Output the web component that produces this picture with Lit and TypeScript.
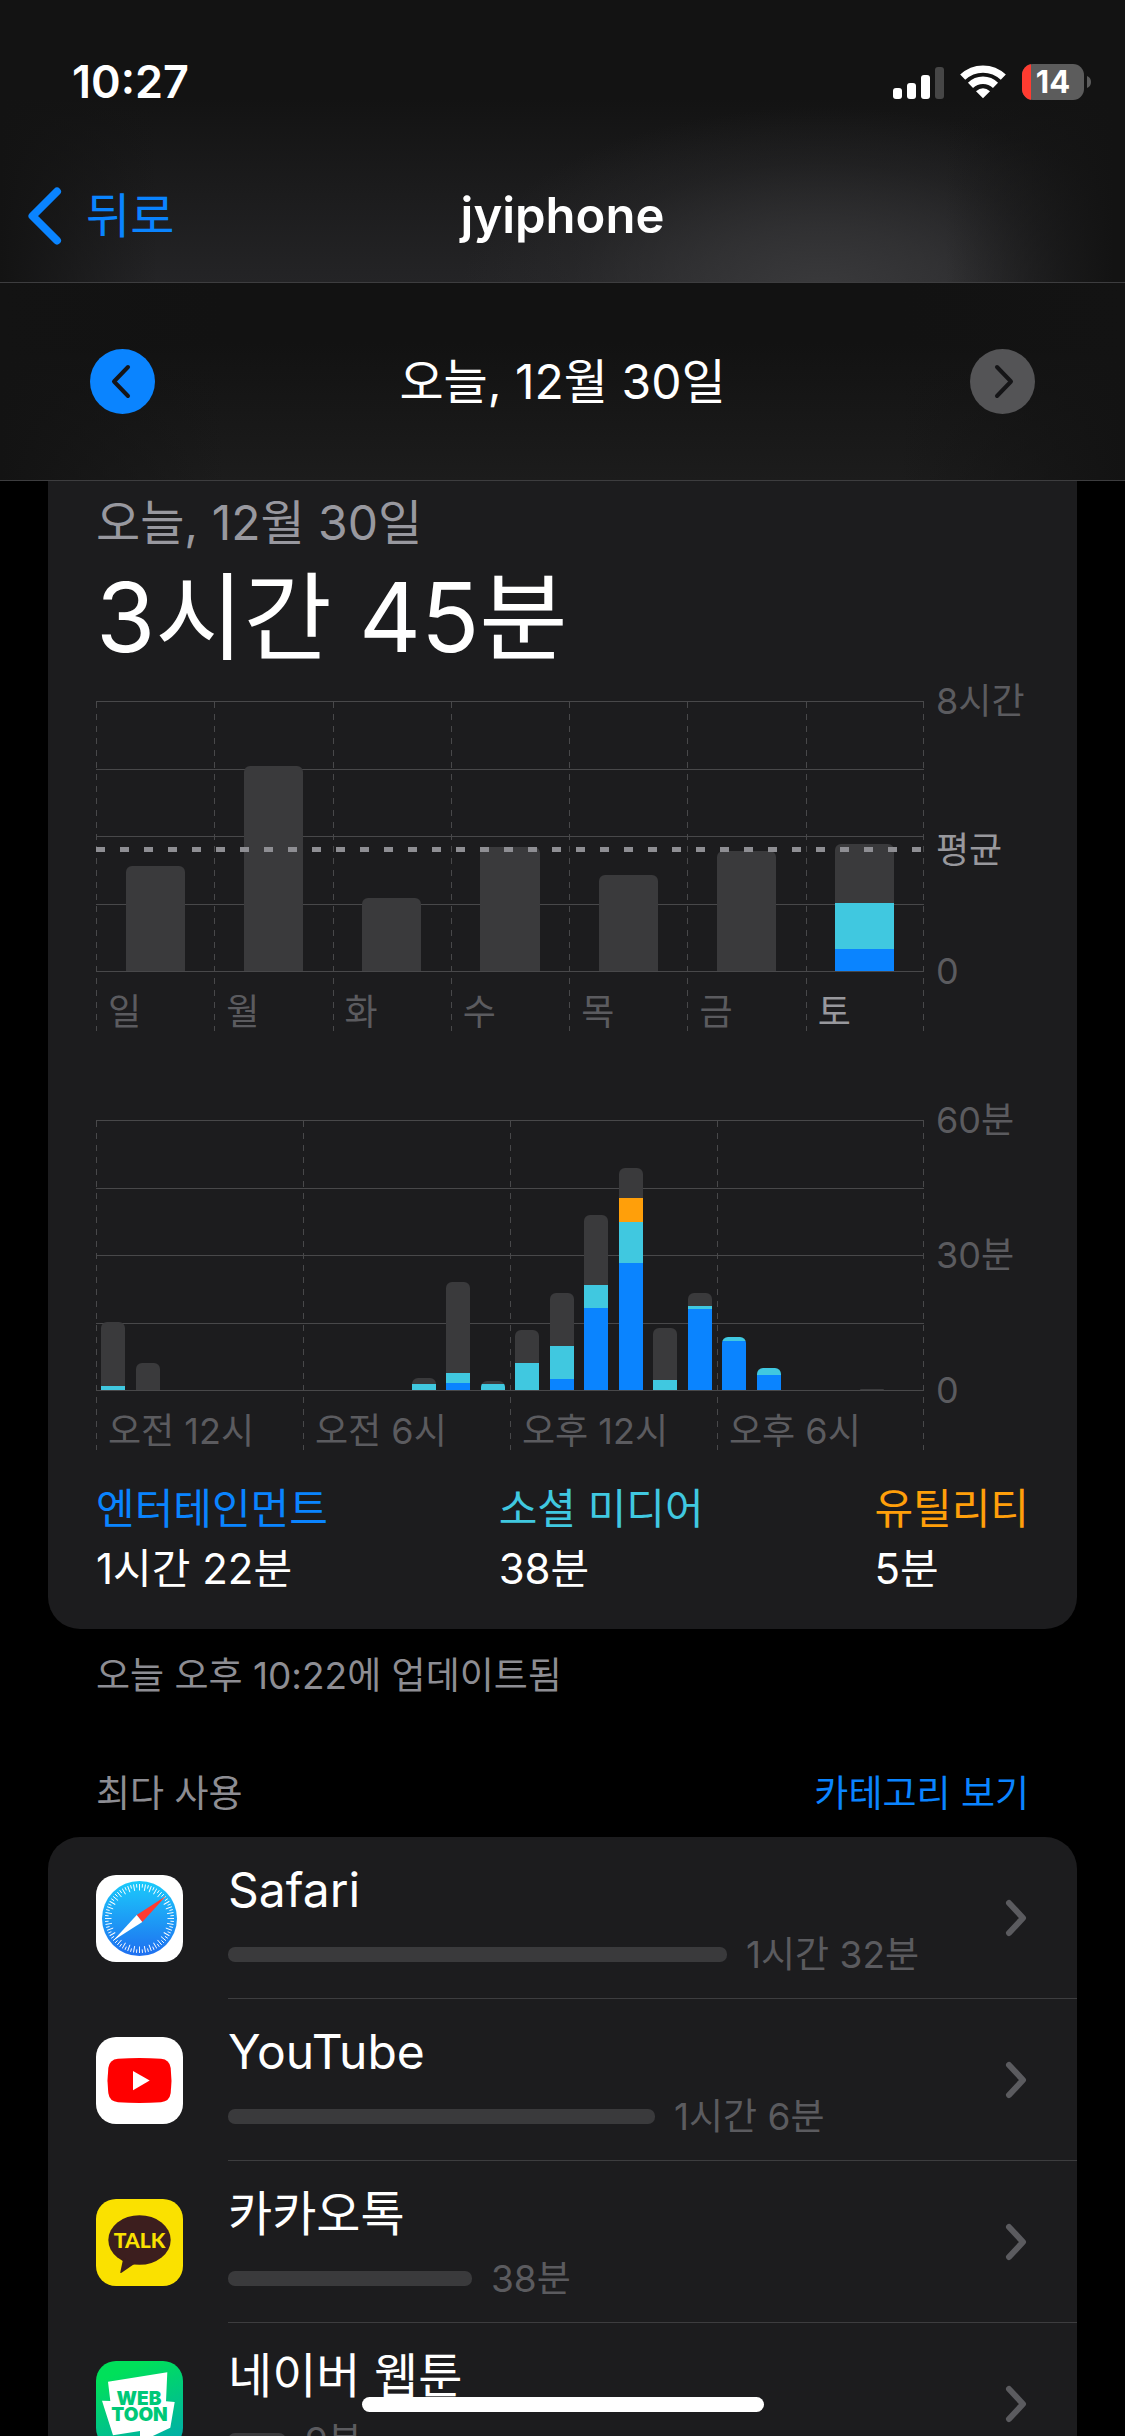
import { LitElement, html, svg, css, nothing } from "lit";
import { customElement, property } from "lit/decorators.js";
import { classMap } from "lit/directives/class-map.js";
import { styleMap } from "lit/directives/style-map.js";

type Tone = "rest" | "blue" | "cyan" | "orange";
interface Segment { tone: Tone; size: number; }
interface Tick { text: string; at: number; strong?: boolean; }
interface Section { text: string; strong?: boolean; }

const DAY_MAX = 270;

const weekBars: Segment[][] = [
  [{ tone: "rest", size: 105 }],
  [{ tone: "rest", size: 205 }],
  [{ tone: "rest", size: 73 }],
  [{ tone: "rest", size: 124 }],
  [{ tone: "rest", size: 96 }],
  [{ tone: "rest", size: 120 }],
  [{ tone: "rest", size: 59 }, { tone: "cyan", size: 46 }, { tone: "blue", size: 22 }],
];

const hourBars: Segment[][] = Array.from({ length: 24 }, () => []);
hourBars[0] = [{ tone: "rest", size: 64 }, { tone: "cyan", size: 4 }];
hourBars[1] = [{ tone: "rest", size: 27 }];
hourBars[9] = [{ tone: "rest", size: 6 }, { tone: "cyan", size: 6 }];
hourBars[10] = [{ tone: "rest", size: 91 }, { tone: "cyan", size: 10 }, { tone: "blue", size: 7 }];
hourBars[11] = [{ tone: "rest", size: 3 }, { tone: "cyan", size: 6 }];
hourBars[12] = [{ tone: "rest", size: 33 }, { tone: "cyan", size: 27 }];
hourBars[13] = [{ tone: "rest", size: 53 }, { tone: "cyan", size: 33 }, { tone: "blue", size: 11 }];
hourBars[14] = [{ tone: "rest", size: 70 }, { tone: "cyan", size: 23 }, { tone: "blue", size: 82 }];
hourBars[15] = [
  { tone: "rest", size: 30 },
  { tone: "orange", size: 24 },
  { tone: "cyan", size: 41 },
  { tone: "blue", size: 127 },
];
hourBars[16] = [{ tone: "rest", size: 52 }, { tone: "cyan", size: 10 }];
hourBars[17] = [{ tone: "rest", size: 13 }, { tone: "cyan", size: 3 }, { tone: "blue", size: 81 }];
hourBars[18] = [{ tone: "cyan", size: 4 }, { tone: "blue", size: 49 }];
hourBars[19] = [{ tone: "cyan", size: 7 }, { tone: "blue", size: 15 }];
hourBars[22] = [{ tone: "rest", size: 1 }];

@customElement("usage-chart")
export class UsageChart extends LitElement {
  @property({ attribute: false }) bars: Segment[][] = [];
  @property({ attribute: false }) sections: Section[] = [];
  @property({ attribute: false }) ticks: Tick[] = [];
  @property({ type: Number }) average = 0;
  @property({ type: Boolean }) narrow = false;

  static styles = css`
    :host { display: block; }
    .chart { display: grid; grid-template-columns: 1fr 105px; }
    .plot { position: relative; }
    .sections { display: grid; grid-auto-flow: column; grid-auto-columns: 1fr; }
    .section, .edge {
      background: repeating-linear-gradient(to bottom, transparent 0 1px, #48484a 1px 7px, transparent 7px 12px)
        left top / 1px 100% no-repeat;
    }
    .section { box-sizing: border-box; height: 330px; padding: 287px 0 0 12px; }
    .label { font-size: 36px; line-height: 48px; color: #5b5b5f; white-space: nowrap; }
    .strong { color: #98989d; }
    .edge { position: absolute; inset: 0 0 0 auto; width: 1px; }
    .layer { position: absolute; inset: 0 0 auto 0; }
    .rules { height: 271px; display: flex; flex-direction: column; justify-content: space-between; }
    .rule { height: 1px; background: #48484a; }
    .bars {
      height: 270px; display: grid; grid-auto-flow: column; grid-auto-columns: 1fr;
      align-items: end; justify-items: center;
    }
    .bar { width: 50%; border-radius: 6px 6px 0 0; overflow: hidden; }
    .slim .bar { width: 70%; }
    .rest { background: #3a3a3c; }
    .blue { background: #0a84ff; }
    .cyan { background: #40c8e0; }
    .orange { background: #ff9f0a; }
    .average {
      height: 5px;
      background: repeating-linear-gradient(to right, #8e8e93 0 9px, transparent 9px 24px);
    }
    .axis { position: relative; height: 270px; }
    .tick { position: absolute; left: 12px; transform: translateY(-50%); }
  `;

  render() {
    return html`
      <div class="chart">
        <div class="plot">
          <div class="sections">
            ${this.sections.map((s) => html`<div class="section">
              <div class=${classMap({ label: true, strong: !!s.strong })}>${s.text}</div>
            </div>`)}
          </div>
          <div class="edge"></div>
          <div class="layer rules">${[0, 1, 2, 3, 4].map(() => html`<div class="rule"></div>`)}</div>
          <div class=${classMap({ layer: true, bars: true, slim: this.narrow })}>
            ${this.bars.map((bar) => html`<div class="bar">
              ${bar.map((s) => html`<div class=${s.tone} style=${styleMap({ height: `${s.size}px` })}></div>`)}
            </div>`)}
          </div>
          ${this.average
            ? html`<div class="layer average" style=${styleMap({ top: `${DAY_MAX - this.average}px` })}></div>`
            : nothing}
        </div>
        <div class="axis">
          ${this.ticks.map((t) => html`<div
            class=${classMap({ label: true, tick: true, strong: !!t.strong })}
            style=${styleMap({ top: `${t.at}%` })}>${t.text}</div>`)}
        </div>
      </div>
    `;
  }
}

const safariIcon = svg`
  <defs>
    <linearGradient id="sky" x1="0" y1="0" x2="0" y2="1">
      <stop offset="0" stop-color="#1bcbfb"></stop><stop offset="1" stop-color="#1f6ff0"></stop>
    </linearGradient>
  </defs>
  <rect width="87" height="87" rx="20" fill="#fff"></rect>
  <circle cx="43.5" cy="43.5" r="37.5" fill="url(#sky)"></circle>
  ${Array.from({ length: 72 }, (_, i) => svg`<line x1="43.5" x2="43.5" y1="9" y2=${i % 2 ? 12.5 : 15.5}
    stroke="#fff" stroke-width="0.9" transform=${`rotate(${i * 5} 43.5 43.5)`}></line>`)}
  <path d="M70 21 40.7 40l5.6 7z" fill="#ff3b30"></path>
  <path d="M17.3 65.5 40.7 40l5.6 7z" fill="#fff"></path>`;

const youtubeIcon = svg`
  <rect width="87" height="87" rx="20" fill="#fff"></rect>
  <path d="M22 21.8Q43.5 20.2 65 21.8Q73.5 22.5 74.7 31Q76.3 43.5 74.7 56Q73.5 64.5 65 65.2Q43.5 66.8 22 65.2Q13.500 64.500 12.300 56Q10.700 43.500 12.300 31Q13.500 22.500 22 21.800z" fill="#f00"></path>
  <path d="M37 34v19.200l16.700-9.600z" fill="#fff"></path>`;

const talkIcon = svg`
  <rect width="87" height="87" rx="20" fill="#fae100"></rect>
  <ellipse cx="43.5" cy="41" rx="31.2" ry="24.8" fill="#3c1e1e"></ellipse>
  <path d="M27.3 59 24.3 73.2Q24.3 74.5 25.5 73.8L39 64.500z" fill="#3c1e1e"></path>
  <text x="43.5" y="49" text-anchor="middle" class="talk">TALK</text>`;

const webtoonIcon = svg`
  <defs>
    <linearGradient id="leaf" x1="0.3" y1="0" x2="0.7" y2="1">
      <stop offset="0.1" stop-color="#00e05a"></stop><stop offset="1" stop-color="#00afa8"></stop>
    </linearGradient>
  </defs>
  <rect width="87" height="87" rx="20" fill="url(#leaf)"></rect>
  <path d="M12 20.7 71.3 11.3 70 40.3l8.7.7-4.4 25.7L54.7 76 44 85V70l-27 4.3L6 39.7l8.3.3z" fill="#fff"></path>
  <text x="43" y="44" text-anchor="middle" class="toon">WEB</text>
  <text x="43.5" y="60" text-anchor="middle" class="toon">TOON</text>`;

const apps = [
  { name: "Safari", time: "1시간 32분", share: 499, icon: safariIcon },
  { name: "YouTube", time: "1시간 6분", share: 427, icon: youtubeIcon },
  { name: "카카오톡", time: "38분", share: 244, icon: talkIcon },
  { name: "네이버 웹툰", time: "9분", share: 58, icon: webtoonIcon },
];

@customElement("app-root")
export class AppRoot extends LitElement {
  static styles = css`
    :host {
      display: flex; flex-direction: column; position: relative; height: 100vh; overflow: hidden;
      background: #000; color: #fff;
      font-family: Inter, "Noto Sans CJK KR", sans-serif; font-weight: 400;
    }
    button {
      appearance: none; border: 0; padding: 0; margin: 0; background: none;
      font: inherit; color: inherit; display: flex; align-items: center;
    }
    svg { display: block; flex: none; }
    h1, h2, p { margin: 0; font-size: inherit; font-weight: inherit; }

    .top {
      border-bottom: 1px solid #3d3d3f;
      background:
        linear-gradient(to right, #131313 0, transparent 14%, transparent 84%, #131313 99%),
        radial-gradient(ellipse 32% 66% at 73% 104%, #3a3a3c 0, #38383ab0 35%, #30303250 70%, transparent 100%),
        linear-gradient(#131313 35%, #242426);
    }
    .status { display: flex; align-items: center; padding: 50px 34px 36px 72px; height: 64px; }
    .clock { font-size: 45px; line-height: 64px; font-weight: 600; margin-right: auto; }
    .signal, .wifi { margin-right: 16px; }
    .charge { font-size: 31px; font-weight: 700; fill: #fff; }

    .nav { display: grid; grid-template-columns: 1fr auto 1fr; align-items: center; height: 132px; padding: 0 28px; }
    .back { color: #0a84ff; font-size: 48px; line-height: 60px; gap: 24px; justify-self: start; }
    .title { font-size: 49px; line-height: 60px; font-weight: 600; }

    .datebar {
      display: flex; align-items: center; justify-content: space-between;
      height: 197px; padding: 0 90px; border-bottom: 1px solid #3d3d3f;
      background: linear-gradient(to right, #131313, transparent 20%, transparent 80%, #131313), linear-gradient(#121212 30%, #1c1c1c);
    }
    .date { font-size: 48px; line-height: 60px; }

    .content { flex: 1; min-height: 0; overflow: hidden; padding: 0 48px; }
    .summary { background: #1c1c1e; border-radius: 0 0 32px 32px; padding: 12px 48px 30px; }
    .subtitle { font-size: 48px; line-height: 60px; color: #98989f; }
    .total { font-size: 96px; line-height: 128px; margin-bottom: 20px; }
    .week { margin-bottom: 89px; }
    .legend { display: flex; justify-content: space-between; margin-top: 29px; font-size: 42px; line-height: 60px; }
    .blue { color: #0a84ff; }
    .cyan { color: #40c8e0; }
    .orange { color: #ff9f0a; }

    .updated { padding: 23px 48px 0; font-size: 37px; line-height: 48px; color: #8d8d93; }
    .heading {
      display: flex; justify-content: space-between; padding: 70px 48px 19px;
      font-size: 37px; line-height: 48px; color: #8d8d93;
    }
    .link { color: #0a84ff; }

    .list { background: #1c1c1e; border-radius: 32px; margin: 0; padding: 0; list-style: none; }
    .row { display: flex; align-items: center; gap: 45px; padding-left: 48px; color: inherit; text-decoration: none; }
    .body {
      flex: 1; display: flex; align-items: center; justify-content: space-between;
      height: 161px; padding-right: 50px; border-bottom: 1px solid #3d3d3f;
    }
    .info { padding-top: 3px; }
    .name { font-size: 48px; line-height: 60px; }
    .usage { display: flex; align-items: center; gap: 19px; margin-top: 11px; font-size: 37px; line-height: 48px; color: #5b5b5f; }
    .meter { height: 15px; border-radius: 7px; background: #3a3a3c; }
    .talk { font-family: Lato, sans-serif; font-size: 21px; font-weight: 900; fill: #fae100; }
    .toon { font-size: 19px; font-weight: 900; fill: #00c878; }
    .home {
      position: absolute; left: 50%; bottom: 24px; width: 402px; height: 15px; transform: translateX(-50%);
      border-radius: 8px; background: #fff;
    }
  `;

  render() {
    return html`
      <header class="top">
        <div class="status">
          <span class="clock">10:27</span>
          <svg class="signal" width="51" height="33" viewBox="0 0 51 33" aria-hidden="true">
            <rect x="0" y="22" width="9" height="11" rx="3" fill="#fff"></rect>
            <rect x="14" y="17" width="9" height="16" rx="3" fill="#fff"></rect>
            <rect x="28" y="9" width="9" height="24" rx="3" fill="#fff"></rect>
            <rect x="42" y="1" width="9" height="32" rx="3" fill="#464646"></rect>
          </svg>
          <svg class="wifi" width="46" height="34" viewBox="0 0 46 34" aria-hidden="true">
            <g fill="none" stroke="#fff" stroke-width="7.3">
              <path d="M2.7 12.2A29.3 29.3 0 0 1 43.3 12.2"></path>
              <path d="M10.5 20.3A18 18 0 0 1 35.5 20.3"></path>
            </g>
            <path d="M23 33.3 16 26.2Q23 20.4 30 26.2z" fill="#fff"></path>
          </svg>
          <svg width="69" height="36" viewBox="0 0 69 36">
            <clipPath id="cell"><rect width="62" height="36" rx="11"></rect></clipPath>
            <g clip-path="url(#cell)">
              <rect width="62" height="36" fill="#5c5c5c"></rect>
              <rect width="9" height="36" fill="#ff3b30"></rect>
            </g>
            <path d="M65 12q4 1.5 4 6t-4 6z" fill="#5c5c5c"></path>
            <text x="31" y="29" text-anchor="middle" class="charge">14</text>
          </svg>
        </div>
        <nav class="nav">
          <button class="back">
            <svg width="34" height="58" viewBox="0 0 34 58" fill="none" stroke="currentColor" stroke-width="8"
              stroke-linecap="round" stroke-linejoin="round" aria-hidden="true"><path d="M29 4.5 4.5 29 29 53.5"></path></svg>
            뒤로
          </button>
          <h1 class="title">jyiphone</h1>
        </nav>
      </header>
      <div class="datebar">
        <button aria-label="이전">
          <svg width="65" height="65" viewBox="0 0 65 65"><circle cx="32.5" cy="32.5" r="32.5" fill="#0a84ff"></circle>
            <path d="M38 18 24 32.5 38 47" fill="none" stroke="#151517" stroke-width="4" stroke-linecap="round" stroke-linejoin="round"></path></svg>
        </button>
        <h2 class="date">오늘, 12월 30일</h2>
        <button aria-label="다음" disabled>
          <svg width="65" height="65" viewBox="0 0 65 65"><circle cx="32.5" cy="32.5" r="32.5" fill="#545456"></circle>
            <path d="M27 18 41 32.5 27 47" fill="none" stroke="#151517" stroke-width="4" stroke-linecap="round" stroke-linejoin="round"></path></svg>
        </button>
      </div>
      <main class="content">
        <section class="summary">
          <p class="subtitle">오늘, 12월 30일</p>
          <p class="total">3시간 45분</p>
          <usage-chart class="week"
            .bars=${weekBars}
            .sections=${[..."일월화수목금토"].map((text) => ({ text, strong: text === "토" }))}
            .ticks=${[{ text: "8시간", at: 0 }, { text: "평균", at: 55, strong: true }, { text: "0", at: 100 }]}
            .average=${124}></usage-chart>
          <usage-chart narrow
            .bars=${hourBars}
            .sections=${["오전 12시", "오전 6시", "오후 12시", "오후 6시"].map((text) => ({ text }))}
            .ticks=${[{ text: "60분", at: 0 }, { text: "30분", at: 50 }, { text: "0", at: 100 }]}></usage-chart>
          <div class="legend">
            <div><div class="blue">엔터테인먼트</div><div>1시간 22분</div></div>
            <div><div class="cyan">소셜 미디어</div><div>38분</div></div>
            <div><div class="orange">유틸리티</div><div>5분</div></div>
          </div>
        </section>
        <p class="updated">오늘 오후 10:22에 업데이트됨</p>
        <div class="heading"><h2>최다 사용</h2><button class="link">카테고리 보기</button></div>
        <ul class="list">
          ${apps.map((app) => html`<li><a class="row" href="#">
            <svg width="87" height="87" viewBox="0 0 87 87" aria-hidden="true">${app.icon}</svg>
            <div class="body">
              <div class="info">
                <div class="name">${app.name}</div>
                <div class="usage"><div class="meter" style=${styleMap({ width: `${app.share}px` })}></div>${app.time}</div>
              </div>
              <svg width="22" height="38" viewBox="0 0 22 38" fill="none" stroke="#5b5b5f" stroke-width="6"
                stroke-linecap="round" stroke-linejoin="round" aria-hidden="true"><path d="M4 4 18 19 4 34"></path></svg>
            </div>
          </a></li>`)}
        </ul>
      </main>
      <div class="home"></div>
    `;
  }
}
